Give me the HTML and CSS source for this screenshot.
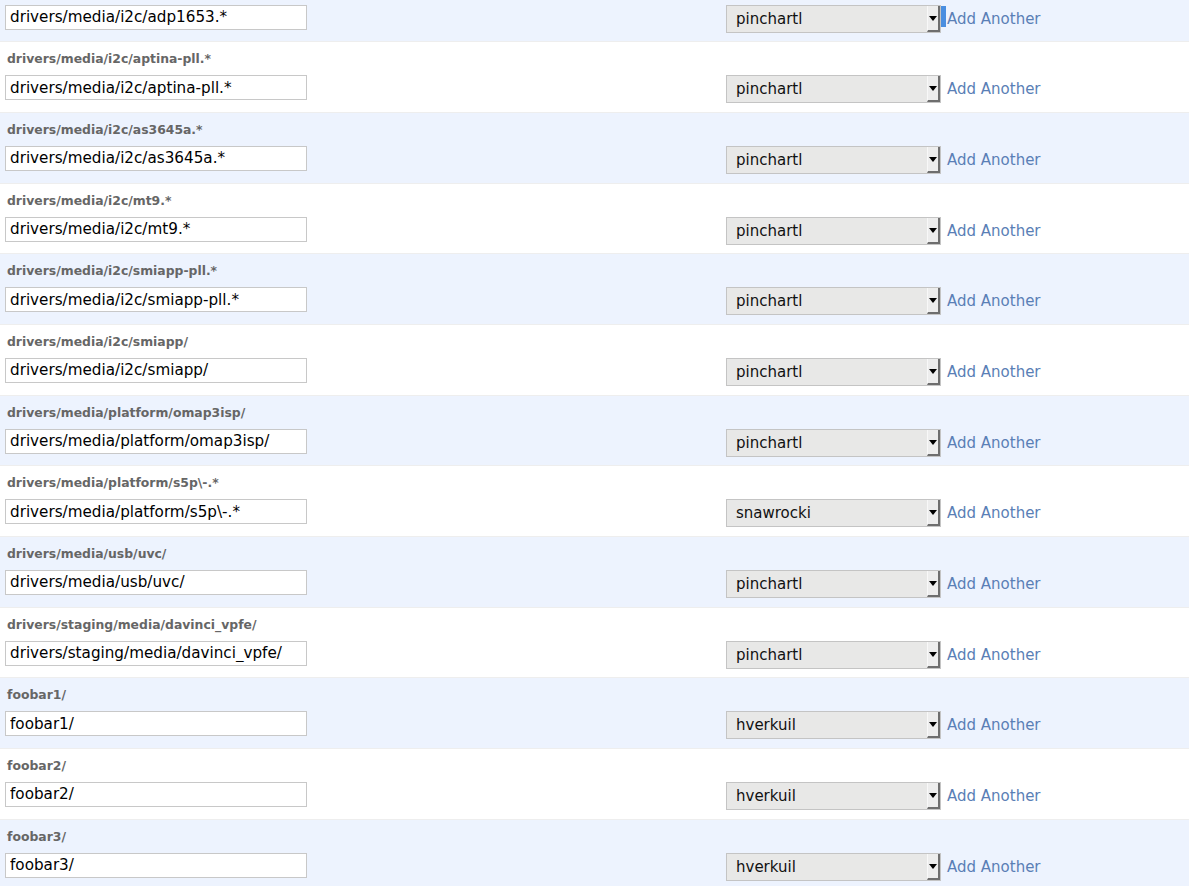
FILE: index.html
```html
<!DOCTYPE html>
<html>
<head>
<meta charset="utf-8">
<link rel="stylesheet" href="styles.css">
</head>
<body>
<div class="list">
  <div class="row alt">
    <div class="label"></div>
    <div class="fields">
      <input class="path" type="text" value="drivers/media/i2c/adp1653.*">
      <div class="select"><span class="val">pinchartl</span><span class="btn"><span class="tri"></span></span></div>
      <a class="add focus" href="#">Add Another</a>
    </div>
  </div>
  <div class="row">
    <div class="label">drivers/media/i2c/aptina-pll.*</div>
    <div class="fields">
      <input class="path" type="text" value="drivers/media/i2c/aptina-pll.*">
      <div class="select"><span class="val">pinchartl</span><span class="btn"><span class="tri"></span></span></div>
      <a class="add" href="#">Add Another</a>
    </div>
  </div>
  <div class="row alt">
    <div class="label">drivers/media/i2c/as3645a.*</div>
    <div class="fields">
      <input class="path" type="text" value="drivers/media/i2c/as3645a.*">
      <div class="select"><span class="val">pinchartl</span><span class="btn"><span class="tri"></span></span></div>
      <a class="add" href="#">Add Another</a>
    </div>
  </div>
  <div class="row">
    <div class="label">drivers/media/i2c/mt9.*</div>
    <div class="fields">
      <input class="path" type="text" value="drivers/media/i2c/mt9.*">
      <div class="select"><span class="val">pinchartl</span><span class="btn"><span class="tri"></span></span></div>
      <a class="add" href="#">Add Another</a>
    </div>
  </div>
  <div class="row alt">
    <div class="label">drivers/media/i2c/smiapp-pll.*</div>
    <div class="fields">
      <input class="path" type="text" value="drivers/media/i2c/smiapp-pll.*">
      <div class="select"><span class="val">pinchartl</span><span class="btn"><span class="tri"></span></span></div>
      <a class="add" href="#">Add Another</a>
    </div>
  </div>
  <div class="row">
    <div class="label">drivers/media/i2c/smiapp/</div>
    <div class="fields">
      <input class="path" type="text" value="drivers/media/i2c/smiapp/">
      <div class="select"><span class="val">pinchartl</span><span class="btn"><span class="tri"></span></span></div>
      <a class="add" href="#">Add Another</a>
    </div>
  </div>
  <div class="row alt">
    <div class="label">drivers/media/platform/omap3isp/</div>
    <div class="fields">
      <input class="path" type="text" value="drivers/media/platform/omap3isp/">
      <div class="select"><span class="val">pinchartl</span><span class="btn"><span class="tri"></span></span></div>
      <a class="add" href="#">Add Another</a>
    </div>
  </div>
  <div class="row">
    <div class="label">drivers/media/platform/s5p\-.*</div>
    <div class="fields">
      <input class="path" type="text" value="drivers/media/platform/s5p\-.*">
      <div class="select"><span class="val">snawrocki</span><span class="btn"><span class="tri"></span></span></div>
      <a class="add" href="#">Add Another</a>
    </div>
  </div>
  <div class="row alt">
    <div class="label">drivers/media/usb/uvc/</div>
    <div class="fields">
      <input class="path" type="text" value="drivers/media/usb/uvc/">
      <div class="select"><span class="val">pinchartl</span><span class="btn"><span class="tri"></span></span></div>
      <a class="add" href="#">Add Another</a>
    </div>
  </div>
  <div class="row">
    <div class="label">drivers/staging/media/davinci_vpfe/</div>
    <div class="fields">
      <input class="path" type="text" value="drivers/staging/media/davinci_vpfe/">
      <div class="select"><span class="val">pinchartl</span><span class="btn"><span class="tri"></span></span></div>
      <a class="add" href="#">Add Another</a>
    </div>
  </div>
  <div class="row alt">
    <div class="label">foobar1/</div>
    <div class="fields">
      <input class="path" type="text" value="foobar1/">
      <div class="select"><span class="val">hverkuil</span><span class="btn"><span class="tri"></span></span></div>
      <a class="add" href="#">Add Another</a>
    </div>
  </div>
  <div class="row">
    <div class="label">foobar2/</div>
    <div class="fields">
      <input class="path" type="text" value="foobar2/">
      <div class="select"><span class="val">hverkuil</span><span class="btn"><span class="tri"></span></span></div>
      <a class="add" href="#">Add Another</a>
    </div>
  </div>
  <div class="row alt">
    <div class="label">foobar3/</div>
    <div class="fields">
      <input class="path" type="text" value="foobar3/">
      <div class="select"><span class="val">hverkuil</span><span class="btn"><span class="tri"></span></span></div>
      <a class="add" href="#">Add Another</a>
    </div>
  </div>
</div>
</body>
</html>
```

FILE: styles.css
```css
html, body {
  margin: 0;
  padding: 0;
  background: #fff;
  font-family: "DejaVu Sans", Verdana, sans-serif;
  overflow: hidden;
}

.list {
  margin-top: -28.33px;
}

.row {
  padding: 10px 5px 8.67px 5px;
  border-bottom: 1px solid #eeeeee;
  background: #fff;
}

.row.alt {
  background: #edf3fe;
}

.label {
  font-size: 12.4px;
  font-weight: bold;
  color: #666;
  line-height: 13px;
  height: 13px;
  padding-left: 2px;
  margin-bottom: 10px;
  white-space: nowrap;
}

.fields {
  display: flex;
  align-items: flex-start;
  height: 28px;
}

.path {
  box-sizing: border-box;
  width: 302px;
  height: 25px;
  margin: 0;
  padding: 0 4px;
  border: 1px solid #c8c8c8;
  background: #fff;
  font-family: "DejaVu Sans", Verdana, sans-serif;
  font-size: 15.2px;
  color: #000;
  outline: none;
}

.select {
  box-sizing: border-box;
  margin-left: 419px;
  width: 215px;
  height: 28px;
  border: 1px solid #c4c4c4;
  background: #e8e8e7;
  display: flex;
  align-items: center;
  justify-content: space-between;
}

.val {
  font-size: 15px;
  color: #111;
  padding-left: 9px;
  line-height: 26px;
}

.btn {
  box-sizing: border-box;
  width: 13px;
  height: 26px;
  background: #ededed;
  border-left: 1px solid #f8f8f8;
  border-right: 2px solid #6e6e6e;
  border-bottom: 2px solid #6e6e6e;
  display: flex;
  align-items: center;
  justify-content: center;
}

.tri {
  width: 0;
  height: 0;
  border-left: 4px solid transparent;
  border-right: 4px solid transparent;
  border-top: 5px solid #000;
  margin-top: 1px;
}

.add {
  position: relative;
  margin-left: 6px;
  font-size: 15px;
  line-height: 28px;
  color: #5a7fb6;
  text-decoration: none;
}

.add.focus::before {
  content: "";
  position: absolute;
  left: -6px;
  top: 1px;
  width: 5px;
  height: 21px;
  background: #4a8ee0;
}
```
